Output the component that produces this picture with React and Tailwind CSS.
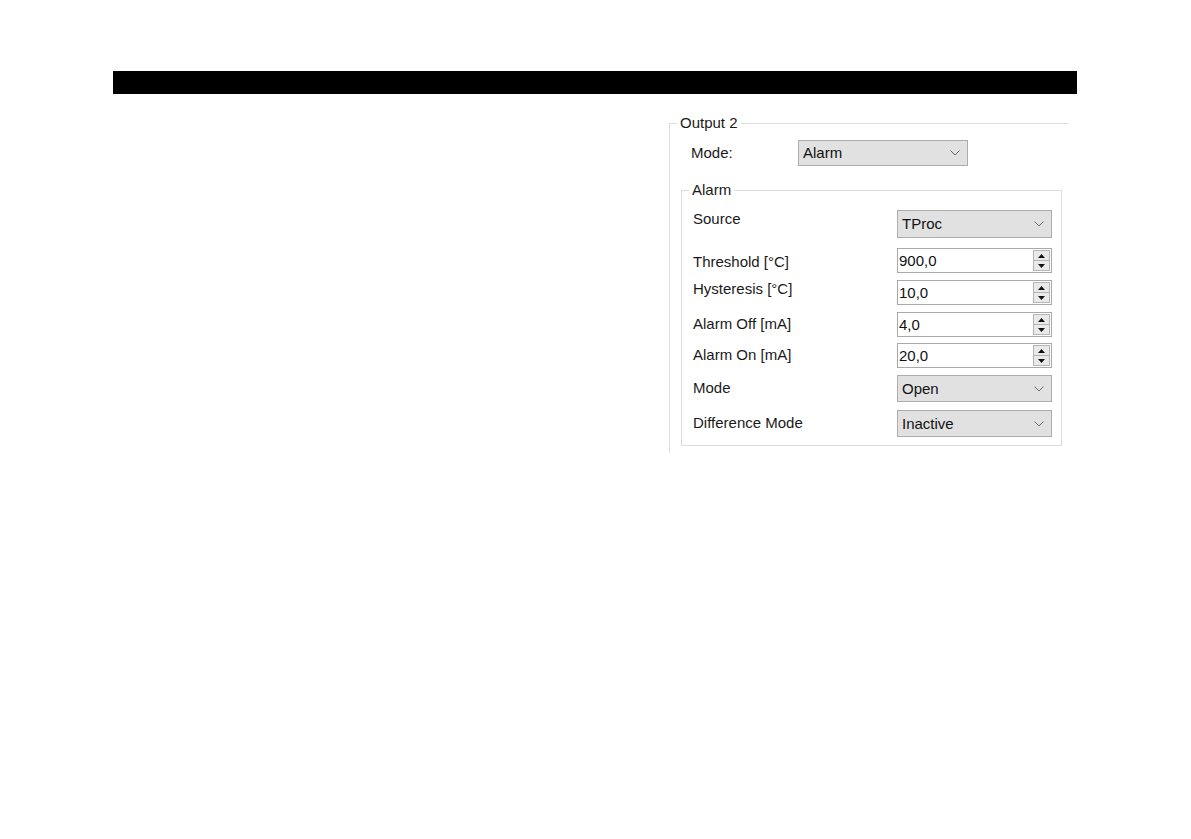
import React from "react";

function Chevron() {
  return (
    <svg width="10" height="6" viewBox="0 0 10 6" className="shrink-0">
      <path d="M0.5 0.5 L5 5 L9.5 0.5" stroke="#6b6b6b" strokeWidth="1" fill="none" />
    </svg>
  );
}

function Select({ value, className }) {
  return (
    <div className={"flex items-center justify-between bg-[#e1e1e1] border border-[#adadad] pl-[4px] pr-[7px] text-[15px] leading-[18px] text-[#111] " + className}>
      <span>{value}</span>
      <Chevron />
    </div>
  );
}

function Spin({ value, className }) {
  return (
    <div className={"flex items-stretch bg-white border border-[#a9a9a9] text-[15px] leading-[18px] text-[#111] " + className}>
      <div className="flex-1 flex items-center pl-[1px]">{value}</div>
      <div className="w-[18px] flex flex-col py-[1px] pr-[1px]">
        <div className="flex-1 flex items-center justify-center bg-[#e9e9e9] border border-[#b5b5b5]">
          <svg width="7" height="4" viewBox="0 0 7 4"><path d="M0 4 L3.5 0 L7 4 Z" fill="#111" /></svg>
        </div>
        <div className="flex-1 flex items-center justify-center bg-[#e9e9e9] border border-[#b5b5b5] border-t-0">
          <svg width="7" height="4" viewBox="0 0 7 4"><path d="M0 0 L3.5 4 L7 0 Z" fill="#111" /></svg>
        </div>
      </div>
    </div>
  );
}

function Row({ label, labelMt, rowMt, children }) {
  return (
    <div className={"flex items-start " + rowMt}>
      <div className={"w-[215px] pl-[11px] text-[15px] leading-[18px] text-[#1a1a1a] whitespace-nowrap " + labelMt}>{label}</div>
      {children}
    </div>
  );
}

export default function App() {
  return (
    <div
      className="w-[1191px] h-[839px] bg-white overflow-hidden"
      style={{ fontFamily: '"Liberation Sans", Arial, sans-serif' }}
    >
      <div className="ml-[113px] mt-[71px] h-[23px] w-[964px] bg-black" />

      <div className="relative ml-[669px] mt-[29px] w-[399px] h-[330px] border-l border-t border-[#dcdcdc]">
        <div className="absolute left-[7px] -top-[10px] bg-white px-[3px] text-[15px] leading-[18px] text-[#1a1a1a]">
          Output 2
        </div>

        <div className="flex items-center mt-[16px] h-[26px]">
          <div className="w-[128px] pl-[21px] text-[15px] leading-[18px] text-[#1a1a1a]">Mode:</div>
          <Select value="Alarm" className="w-[170px] h-[26px]" />
        </div>

        <div className="relative ml-[11px] mt-[24px] w-[381px] h-[256px] border border-[#dcdcdc]">
          <div className="absolute left-[7px] -top-[10px] bg-white px-[3px] text-[15px] leading-[18px] text-[#1a1a1a]">
            Alarm
          </div>

          <Row label="Source" rowMt="mt-[19px]" labelMt="mt-0">
            <Select value="TProc" className="w-[155px] h-[28px]" />
          </Row>
          <Row label="Threshold [°C]" rowMt="mt-[10px]" labelMt="mt-[5px]">
            <Spin value="900,0" className="w-[155px] h-[25px]" />
          </Row>
          <Row label="Hysteresis [°C]" rowMt="mt-[7px]" labelMt="mt-0">
            <Spin value="10,0" className="w-[155px] h-[25px]" />
          </Row>
          <Row label="Alarm Off [mA]" rowMt="mt-[7px]" labelMt="mt-[3px]">
            <Spin value="4,0" className="w-[155px] h-[25px]" />
          </Row>
          <Row label="Alarm On [mA]" rowMt="mt-[6px]" labelMt="mt-[3px]">
            <Spin value="20,0" className="w-[155px] h-[25px]" />
          </Row>
          <Row label="Mode" rowMt="mt-[7px]" labelMt="mt-[4px]">
            <Select value="Open" className="w-[155px] h-[27px]" />
          </Row>
          <Row label="Difference Mode" rowMt="mt-[8px]" labelMt="mt-[4px]">
            <Select value="Inactive" className="w-[155px] h-[27px]" />
          </Row>
        </div>
      </div>
    </div>
  );
}
